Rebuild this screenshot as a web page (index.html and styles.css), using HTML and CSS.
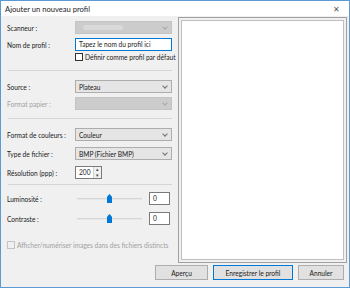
FILE: index.html
```html
<!DOCTYPE html>
<html lang="fr">
<head>
    <meta charset="UTF-8">
    <title>Ajouter un nouveau profil</title>
    <link rel="stylesheet" href="styles.css">
</head>
<body>

<div class="window">
    <div class="titlebar">
        <span class="title">Ajouter un nouveau profil</span>
        <span class="close">&#x2715;</span>
    </div>

    <div class="main">
        <div class="form">
            <div class="row">
                <label class="lbl">Scanneur :</label>
                <div class="combo disabled"><span class="blur"></span><span class="arrow"></span></div>
            </div>
            <div class="row">
                <label class="lbl">Nom de profil :</label>
                <div class="textbox">Tapez le nom du profil ici</div>
            </div>
            <div class="check-row indent">
                <span class="check"></span>
                <span>Définir comme profil par défaut</span>
            </div>

            <div class="sep"></div>

            <div class="row">
                <label class="lbl">Source :</label>
                <div class="combo"><span>Plateau</span><span class="arrow"></span></div>
            </div>
            <div class="row">
                <label class="lbl muted">Format papier :</label>
                <div class="combo disabled"><span></span><span class="arrow"></span></div>
            </div>

            <div class="sep"></div>

            <div class="row wide">
                <label class="lbl">Format de couleurs :</label>
                <div class="combo"><span>Couleur</span><span class="arrow"></span></div>
            </div>
            <div class="row wide">
                <label class="lbl">Type de fichier :</label>
                <div class="combo"><span>BMP (Fichier BMP)</span><span class="arrow"></span></div>
            </div>
            <div class="row">
                <label class="lbl">Résolution (ppp) :</label>
                <div class="spin">
                    <span class="spin-val">200</span>
                    <span class="spin-btns"><span>&#9652;</span><span>&#9662;</span></span>
                </div>
            </div>

            <div class="sep tight"></div>

            <div class="row slider-row">
                <label class="lbl">Luminosité :</label>
                <div class="slider"><span class="track"></span><span class="thumb"></span></div>
                <div class="num">0</div>
            </div>
            <div class="row slider-row">
                <label class="lbl">Contraste :</label>
                <div class="slider"><span class="track"></span><span class="thumb"></span></div>
                <div class="num">0</div>
            </div>

            <div class="check-row bottom-check muted">
                <span class="check off"></span>
                <span>Afficher/numériser images dans des fichiers distincts</span>
            </div>
        </div>

        <div class="preview">
            <div class="preview-inner"></div>
        </div>
    </div>

    <div class="buttons">
        <button class="btn">Aperçu</button>
        <button class="btn default">Enregistrer le profil</button>
        <button class="btn">Annuler</button>
    </div>
</div>

</body>
</html>
```

FILE: styles.css
```css
* {
    box-sizing: border-box;
}
body {
    margin: 0;
    font-family: Lato, "Liberation Sans", sans-serif;
    font-size: 6.6px;
    color: #1a1a1a;
}
.window {
    width: 350px;
    height: 288px;
    border: 1px solid #5b9bd5;
    background-color: #f0f0f0;
    display: flex;
    flex-direction: column;
}
.titlebar {
    height: 15px;
    background-color: #fff;
    display: flex;
    align-items: center;
    justify-content: space-between;
    padding: 0 9px 0 4px;
    flex-shrink: 0;
}
.title {
    font-size: 7.6px;
    color: #222;
}
.close {
    font-size: 8px;
    color: #555;
}
.main {
    display: flex;
    height: 247px;
}
.form {
    width: 176px;
    padding: 5px 4px 0 6px;
    white-space: nowrap;
    overflow: hidden;
}
.row {
    display: flex;
    align-items: center;
    height: 13px;
    margin-bottom: 4px;
}
.row.wide {
    margin-bottom: 6px;
}
.lbl {
    width: 68px;
    flex-shrink: 0;
}
.muted {
    color: #a0a0a0;
}
.combo {
    width: 97px;
    height: 13px;
    background-color: #e5e5e5;
    border: 1px solid #adadad;
    display: flex;
    align-items: center;
    justify-content: space-between;
    padding: 0 4px 0 3px;
}
.combo.disabled {
    background-color: #cccccc;
    border-color: #c4c4c4;
}
.blur {
    width: 40px;
    height: 5px;
    margin-left: 4px;
    border-radius: 3px;
    background-color: #d9d9d9;
}
.arrow {
    width: 4px;
    height: 4px;
    border-right: 1px solid #707070;
    border-bottom: 1px solid #707070;
    transform: rotate(45deg);
    margin-top: -2px;
}
.combo.disabled .arrow {
    border-color: #a8a8a8;
}
.textbox {
    width: 97px;
    height: 13px;
    background-color: #fff;
    border: 1px solid #0078d7;
    padding: 0 3px;
    line-height: 11px;
}
.check-row {
    display: flex;
    align-items: center;
    gap: 2px;
    height: 10px;
}
.indent {
    margin: -3px 0 0 68px;
}
.check {
    width: 8px;
    height: 8px;
    border: 1px solid #333;
    background-color: #fff;
    flex-shrink: 0;
}
.check.off {
    border-color: #c4c4c4;
    background-color: #f0f0f0;
}
.sep {
    height: 1px;
    background-color: #d5d5d5;
    margin: 8px 1px 9px 1px;
}
.sep.tight {
    margin: 5px 1px 7px 1px;
}
.spin {
    width: 27px;
    height: 13px;
    background-color: #fff;
    border: 1px solid #7a7a7a;
    display: flex;
    align-items: stretch;
}
.spin-val {
    flex: 1;
    padding-left: 3px;
    line-height: 11px;
}
.spin-btns {
    width: 8px;
    display: flex;
    flex-direction: column;
    font-size: 5px;
    line-height: 5.5px;
    text-align: center;
    color: #444;
    background-color: #f0f0f0;
    border-left: 1px solid #d0d0d0;
}
.slider-row {
    height: 13px;
    margin-bottom: 7px;
}
.slider {
    position: relative;
    width: 65px;
    height: 13px;
    margin: 0 7px 0 2px;
}
.track {
    position: absolute;
    left: 0;
    right: 0;
    top: 6px;
    height: 2px;
    background-color: #e7e7e7;
    border-top: 1px solid #d6d6d6;
}
.thumb {
    position: absolute;
    left: 30px;
    top: 2px;
    width: 5px;
    height: 9px;
    background-color: #0078d7;
    clip-path: polygon(50% 0, 100% 30%, 100% 100%, 0 100%, 0 30%);
}
.num {
    width: 21px;
    height: 13px;
    background-color: #fff;
    border: 1px solid #7a7a7a;
    padding-left: 3px;
    line-height: 11px;
}
.bottom-check {
    margin-top: 15px;
}
.preview {
    margin: 1px 2px 0 1px;
    flex: 1;
    height: 246px;
    border: 1px solid #a0a0a0;
    padding: 2px;
    background-color: #f0f0f0;
}
.preview-inner {
    height: 100%;
    border: 1px solid #bfbfbf;
    background-color: #fff;
}
.buttons {
    display: flex;
    justify-content: flex-end;
    gap: 5px;
    padding: 2px 5px 0 0;
}
.btn {
    font-family: Lato, "Liberation Sans", sans-serif;
    font-size: 6.6px;
    color: #1a1a1a;
    height: 15px;
    background-color: #e1e1e1;
    border: 1px solid #adadad;
    padding: 0;
}
.btn:nth-child(1) {
    width: 53px;
}
.btn:nth-child(2) {
    width: 80px;
}
.btn:nth-child(3) {
    width: 46px;
}
.btn.default {
    border: 1px solid #0078d7;
    box-shadow: inset 0 0 0 1px #e1e1e1;
}
```
